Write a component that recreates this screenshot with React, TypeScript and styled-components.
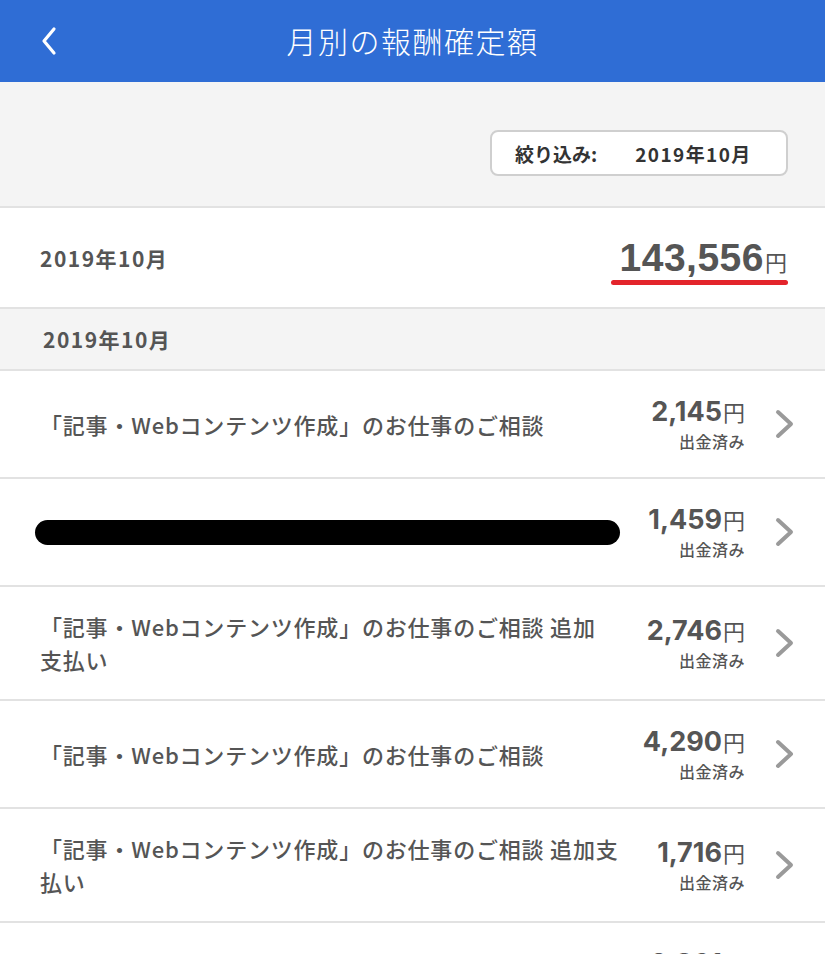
import React from 'react';
import styled, { createGlobalStyle } from 'styled-components';

const GlobalStyle = createGlobalStyle`
  html, body {
    margin: 0;
    padding: 0;
    background: #ffffff;
  }
  body {
    font-family: "Noto Sans CJK JP", "Noto Sans", sans-serif;
    color: #555555;
  }
`;

const Page = styled.div`
  width: 825px;
  min-height: 954px;
  overflow: hidden;
`;

const Header = styled.header`
  height: 82px;
  background: #2f6dd5;
  display: flex;
  align-items: center;
  justify-content: center;
  position: relative;
`;

const BackButton = styled.button`
  position: absolute;
  left: 34px;
  top: 24px;
  width: 30px;
  height: 34px;
  border: none;
  background: transparent;
  padding: 0;
  display: flex;
  align-items: center;
  justify-content: center;
`;

const Title = styled.h1`
  margin: 0 0 2px 0;
  font-size: 30px;
  font-weight: 300;
  color: #ffffff;
  letter-spacing: 1.5px;
`;

const FilterArea = styled.div`
  height: 126px;
  box-sizing: border-box;
  background: #f4f4f4;
  border-bottom: 2px solid #e2e2e2;
  display: flex;
  align-items: flex-start;
  justify-content: flex-end;
  padding: 48px 37px 0 0;
`;

const FilterButton = styled.div`
  width: 298px;
  height: 46px;
  box-sizing: border-box;
  border: 2px solid #cfcfcf;
  border-radius: 8px;
  background: #ffffff;
  display: flex;
  align-items: center;
  padding-left: 23px;
  font-size: 19px;
  font-weight: 700;
  color: #333333;
  gap: 38px;
`;

const FilterValue = styled.span`
  letter-spacing: 1.4px;
`;

const TotalRow = styled.div`
  height: 101px;
  box-sizing: border-box;
  display: flex;
  align-items: center;
  justify-content: space-between;
  padding: 0 37px 0 40px;
  border-bottom: 2px solid #e2e2e2;
`;

const MonthLabel = styled.div`
  font-size: 21px;
  font-weight: 700;
  color: #555555;
  letter-spacing: 1.5px;
`;

const TotalAmount = styled.div`
  position: relative;
  padding: 0 1px 2px 9px;
  margin-top: 2px;
  white-space: nowrap;
  &::after {
    content: '';
    position: absolute;
    left: 0;
    right: 0;
    bottom: -3px;
    height: 5px;
    border-radius: 3px;
    background: #e3242b;
  }
`;

const TotalNum = styled.span`
  font-family: "Liberation Sans", "Noto Sans CJK JP", sans-serif;
  font-size: 39px;
  font-weight: 700;
  letter-spacing: 0.5px;
  color: #555555;
`;

const AmountNum = styled.span`
  font-family: Inter, "Liberation Sans", sans-serif;
  font-size: 27px;
  font-weight: 700;
  color: #555555;
`;

const Yen = styled.span<{ $size: number }>`
  font-size: ${p => p.$size}px;
  font-weight: 400;
  color: #555555;
  margin-left: 1px;
`;

const SectionHeader = styled.div`
  height: 62px;
  box-sizing: border-box;
  background: #f4f4f4;
  border-bottom: 2px solid #e2e2e2;
  display: flex;
  align-items: center;
  padding-left: 43px;
  font-size: 21px;
  font-weight: 700;
  color: #555555;
  letter-spacing: 1.5px;
`;

const Row = styled.div`
  display: flex;
  align-items: center;
  min-height: 108px;
  padding: 0 29px 0 40px;
  border-bottom: 2px solid #e2e2e2;
  box-sizing: border-box;
`;

const RowText = styled.div`
  flex: 1;
  min-width: 0;
  font-size: 22px;
  font-weight: 500;
  line-height: 33px;
  letter-spacing: 0.8px;
  color: #555555;
  padding: 23px 0;
`;

const Redacted = styled.div`
  width: 585px;
  height: 25px;
  margin-left: -5px;
  border-radius: 13px;
  background: #000000;
`;

const AmountCol = styled.div`
  margin-left: 34px;
  display: flex;
  flex-direction: column;
  align-items: flex-end;
  white-space: nowrap;
`;

const Status = styled.div`
  font-size: 16px;
  font-weight: 500;
  letter-spacing: 0.5px;
  color: #555555;
  margin-top: 1px;
`;

const Chevron = styled.div`
  width: 22px;
  margin-left: 29px;
  display: flex;
  align-items: center;
`;

type Item = { title?: string; amount: string };

const items: Item[] = [
  { title: '「記事・Webコンテンツ作成」のお仕事のご相談', amount: '2,145' },
  { amount: '1,459' },
  { title: '「記事・Webコンテンツ作成」のお仕事のご相談 追加支払い', amount: '2,746' },
  { title: '「記事・Webコンテンツ作成」のお仕事のご相談', amount: '4,290' },
  { title: '「記事・Webコンテンツ作成」のお仕事のご相談 追加支払い', amount: '1,716' },
  { title: '「記事・Webコンテンツ作成」のお仕事のご相談', amount: '3,861' },
];

const RightArrow = () => (
  <svg width="22" height="30" viewBox="0 0 22 30">
    <polyline points="4,3 17,15 4,27" fill="none" stroke="#9a9a9a" strokeWidth="4" strokeLinecap="round" strokeLinejoin="round" />
  </svg>
);

export default function App() {
  return (
    <Page>
      <GlobalStyle />
      <Header>
        <BackButton aria-label="戻る">
          <svg width="20" height="30" viewBox="0 0 20 30">
            <polyline points="15,3 5,15 15,27" fill="none" stroke="#ffffff" strokeWidth="3.2" strokeLinecap="round" strokeLinejoin="round" />
          </svg>
        </BackButton>
        <Title>月別の報酬確定額</Title>
      </Header>
      <FilterArea>
        <FilterButton>
          <span>絞り込み:</span>
          <FilterValue>2019年10月</FilterValue>
        </FilterButton>
      </FilterArea>
      <TotalRow>
        <MonthLabel>2019年10月</MonthLabel>
        <TotalAmount>
          <TotalNum>143,556</TotalNum>
          <Yen $size={22}>円</Yen>
        </TotalAmount>
      </TotalRow>
      <SectionHeader>2019年10月</SectionHeader>
      {items.map((it, i) => (
        <Row key={i}>
          <RowText>{it.title ? it.title : <Redacted />}</RowText>
          <AmountCol>
            <div>
              <AmountNum>{it.amount}</AmountNum>
              <Yen $size={22}>円</Yen>
            </div>
            <Status>出金済み</Status>
          </AmountCol>
          <Chevron>
            <RightArrow />
          </Chevron>
        </Row>
      ))}
    </Page>
  );
}
